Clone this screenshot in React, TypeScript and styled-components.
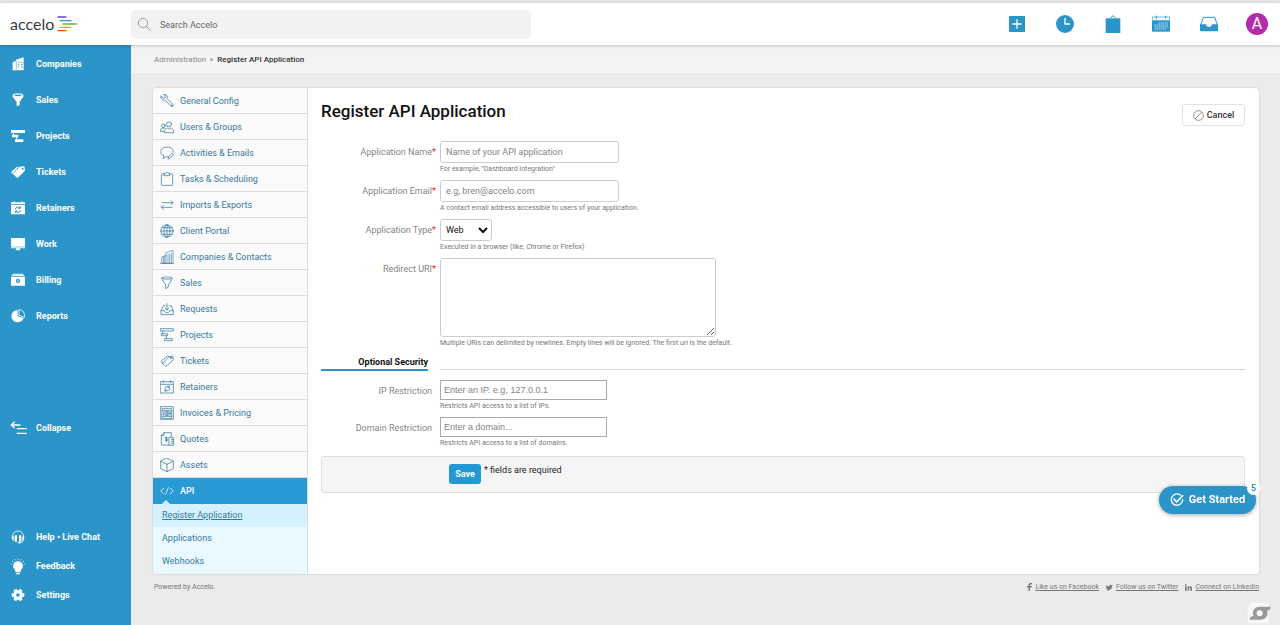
import React from "react";
import styled, { createGlobalStyle, css } from "styled-components";

const blue = "#2b95ca";
const teal = "#37799c";

const GlobalStyle = createGlobalStyle`
  *, *::before, *::after { box-sizing: border-box; }
  body {
    margin: 0;
    background: #ebebeb;
    color: #222;
    font-family: Roboto, "Liberation Sans", sans-serif;
    font-size: 9px;
    line-height: 12px;
  }
  button, input, select, textarea { font: inherit; color: inherit; margin: 0; }
  button { border: 0; padding: 0; background: none; cursor: pointer; }
  a { color: inherit; text-decoration: none; }
  ul { list-style: none; margin: 0; padding: 0; }
  svg { display: block; flex: none; }
`;

/* ---------- layout ---------- */

const Page = styled.div`
  min-height: 100vh;
  display: flex;
  flex-direction: column;
  border-top: 3px solid #e3e3e3;
`;

const Header = styled.header`
  position: relative;
  z-index: 2;
  display: flex;
  align-items: center;
  height: 42px;
  padding-right: 12px;
  background: #fff;
  box-shadow: 0 1px 3px rgba(0, 0, 0, 0.2);
`;

const Logo = styled.a`
  display: flex;
  align-items: center;
  gap: 3px;
  width: 131px;
  padding-left: 10px;
  font-family: Lato, sans-serif;
  font-size: 16px;
  line-height: 20px;
  color: #3c3c3c;
`;

const Search = styled.label`
  display: flex;
  align-items: center;
  gap: 8px;
  width: 400px;
  height: 29px;
  padding: 0 6px;
  border-radius: 5px;
  background: #f2f2f2;
`;

const SearchInput = styled.input`
  flex: 1;
  border: 0;
  padding: 1px 0 0;
  background: transparent;
  font-size: 9px;
  &::placeholder { color: #666; opacity: 1; }
`;

const HeaderActions = styled.nav`
  display: flex;
  gap: 26px;
  margin-left: auto;
`;

const HeaderButton = styled.button`
  display: grid;
  place-items: center;
  width: 22px;
  height: 22px;
  color: ${blue};
`;

const Avatar = styled(HeaderButton)`
  border-radius: 50%;
  background: #b32bab;
  color: #fff;
  font-size: 16px;
  line-height: 22px;
`;

const Body = styled.div`
  flex: 1;
  display: flex;
`;

const Sidebar = styled.nav`
  flex: none;
  display: flex;
  flex-direction: column;
  justify-content: space-between;
  width: 131px;
  padding-bottom: 16px;
  background: ${blue};
`;

const SideLink = styled.a<{ $compact?: boolean }>`
  display: flex;
  align-items: center;
  gap: 11px;
  height: ${(p) => (p.$compact ? 29 : 36)}px;
  padding: 1px 0 0 11px;
  color: #fff;
  font-size: 9px;
  font-weight: 700;
`;

const Main = styled.main`
  flex: 1;
  min-width: 0;
`;

const Breadcrumb = styled.nav`
  display: flex;
  align-items: center;
  gap: 4px;
  height: 30px;
  padding-left: 23px;
  background: #f3f3f3;
  border-bottom: 1px solid #e2e2e2;
  color: #888;
  font-size: 8px;
  b { color: #333; font-weight: 500; }
`;

const Dot = styled.i`
  width: 3px;
  height: 3px;
  border-radius: 50%;
  background: #aaa;
`;

const Content = styled.div`
  padding: 13px 21px 0 22px;
`;

const Panel = styled.div`
  display: flex;
  min-height: 486px;
  border-radius: 4px;
  background: #fff;
  box-shadow: 0 0 2px rgba(0, 0, 0, 0.22);
  overflow: hidden;
`;

const ConfigNav = styled.nav`
  flex: none;
  width: 155px;
  border-right: 1px solid #ddd;
`;

const ConfigLink = styled.a<{ $active?: boolean }>`
  position: relative;
  display: flex;
  align-items: center;
  gap: 6px;
  height: 26px;
  padding-left: 7px;
  border-bottom: 1px solid #dcdcdc;
  background: #fafafa;
  color: ${teal};
  ${(p) =>
    p.$active &&
    css`
      border-bottom-color: #2a9ad5;
      background: #2a9ad5;
      color: #fff;
      font-weight: 500;
      &::after {
        content: "";
        position: absolute;
        left: 9px;
        bottom: -1px;
        border: 4px solid transparent;
        border-top: 0;
        border-bottom-color: #d5f1ff;
      }
    `}
`;

const SubNav = styled.ul`
  padding-bottom: 1px;
  background: #eaf8ff;
`;

const SubLink = styled.a<{ $active?: boolean }>`
  display: block;
  padding-left: 9px;
  line-height: 23px;
  color: ${teal};
  background: ${(p) => (p.$active ? "#d5f1ff" : "transparent")};
  text-decoration: ${(p) => (p.$active ? "underline" : "none")};
`;

/* ---------- form ---------- */

const Form = styled.form`
  flex: 1;
  min-width: 0;
  padding: 11px 14px 12px 13px;
`;

const FormHead = styled.div`
  display: flex;
  justify-content: space-between;
  align-items: flex-start;
  height: 42px;
`;

const Title = styled.h1`
  margin: 0;
  font-size: 17px;
  line-height: 24px;
  font-weight: 500;
  color: #111;
`;

const CancelButton = styled.button`
  display: flex;
  align-items: center;
  justify-content: center;
  gap: 3px;
  width: 63px;
  height: 22px;
  margin-top: 5px;
  border: 1px solid #e2e2e2;
  border-radius: 3px;
  background: #fff;
  font-weight: 500;
  color: #333;
`;

const Row = styled.div`
  display: grid;
  grid-template-columns: 116px 1fr;
  column-gap: 3px;
  margin-bottom: 5px;
  > label {
    display: flex;
    justify-content: flex-end;
    line-height: 22px;
    color: #858585;
  }
`;

const Star = styled.span`
  width: 5px;
  color: #e8202a;
`;

const Hint = styled.p`
  margin: 0;
  font-size: 7px;
  line-height: 12px;
  color: #777;
`;

const field = css`
  display: block;
  border: 1px solid #ccc;
  border-radius: 3px;
  background: #fff;
  &::placeholder { color: #858585; opacity: 1; }
`;

const TextInput = styled.input`
  ${field}
  width: 179px;
  height: 22px;
  padding: 0 5px;
`;

const PlainInput = styled.input`
  ${field}
  width: 167px;
  height: 20px;
  padding: 0 3px;
  border: 1px solid #aaa;
  border-radius: 0;
  font-family: "Liberation Sans", sans-serif;
`;

const Select = styled.select`
  ${field}
  width: 52px;
  height: 22px;
  padding: 0 1px;
  color: #111;
`;

const TextArea = styled.textarea`
  ${field}
  width: 276px;
  height: 79px;
  padding: 4px;
`;

const SectionHead = styled.div`
  display: grid;
  grid-template-columns: 107px 1fr;
  column-gap: 12px;
  margin-bottom: 9px;
  h2 {
    margin: 0;
    padding-top: 2px;
    border-bottom: 2px solid ${blue};
    font-size: 9px;
    line-height: 13px;
    font-weight: 700;
    text-align: right;
    color: #111;
  }
  span { border-bottom: 1px solid #d5d5d5; margin-bottom: 1px; }
`;

const FormFoot = styled.div`
  display: flex;
  align-items: flex-start;
  gap: 3px;
  height: 37px;
  margin-top: 7px;
  padding: 7px 0 0 127px;
  border: 1px solid #dedede;
  border-radius: 3px;
  background: #f5f5f5;
`;

const SaveButton = styled.button`
  width: 32px;
  height: 20px;
  border-radius: 3px;
  background: #2199d4;
  color: #fff;
  font-weight: 700;
`;

/* ---------- footer and floating items ---------- */

const Footer = styled.footer`
  display: flex;
  gap: 7px;
  padding: 7px 0 0 1px;
  font-size: 7px;
  color: #777;
  span { margin-right: auto; }
  a { display: flex; align-items: center; gap: 3px; }
  u { text-underline-offset: 1px; }
`;

const GetStarted = styled.button`
  position: fixed;
  right: 24px;
  bottom: 111px;
  z-index: 3;
  display: flex;
  align-items: center;
  justify-content: center;
  gap: 5px;
  width: 97px;
  height: 28px;
  border-radius: 14px;
  background: ${blue};
  box-shadow: 0 1px 4px rgba(0, 0, 0, 0.35);
  color: #fff;
  font-size: 11px;
  font-weight: 700;
`;

const Count = styled.span`
  position: absolute;
  top: -4px;
  right: -4px;
  width: 13px;
  height: 13px;
  border-radius: 50%;
  background: #fff;
  color: ${blue};
  font-size: 9px;
  line-height: 13px;
`;

const Watermark = styled.div`
  position: fixed;
  right: 9px;
  bottom: 1px;
  z-index: 3;
`;

/* ---------- icons ---------- */

const Solid = ({ children }: { children: React.ReactNode }) => (
  <svg width="14" height="14" viewBox="0 0 42 42" fill="currentColor" stroke="none" overflow="visible">
    {children}
  </svg>
);

const Outline = ({ children }: { children: React.ReactNode }) => (
  <svg width="14" height="14" viewBox="0 0 42 42" fill="none" stroke="currentColor" strokeWidth="2.2" strokeLinejoin="round" strokeLinecap="round">
    {children}
  </svg>
);

const solid = {
  companies: (
    <Solid>
      <path d="M5 16l10-5V8l23-7v39H3v-2h2z" />
      <path d="M16 12v25" stroke={blue} strokeWidth="1.500" />
      <path d="M21 16h4M21 23h4M21 30h4M30 16h5M30 23h5M30 30h5" stroke={blue} strokeWidth="2.500" />
    </Solid>
  ),
  sales: (
    <Solid>
      <path d="M5 7c0-8 32-8 32 0v4L26 27v9l-9 4V27L5 11z" />
      <ellipse cx="21" cy="7" rx="12" ry="2.500" fill={blue} />
    </Solid>
  ),
  projects: (
    <Solid>
      <path d="M0 3h42v9H0zM3 17h19v8H3zM12 31h25v8H12z" />
      <path d="M7 12v6M17 24v8" stroke="currentColor" strokeWidth="3" />
    </Solid>
  ),
  tickets: (
    <Solid>
      <path d="M0 22L18 5h5L6 24l6 9z" />
      <path d="M8 25L26 5l14-1 2 13-20 20c-3 2-5 2-7-1l-7-8c-1-1-1-2 0-3z" />
      <circle cx="35" cy="11" r="3" fill={blue} />
    </Solid>
  ),
  retainers: (
    <Solid>
      <path d="M0 4h42v6H0zM0 12h42v28H0z" />
      <path d="M8 1h3v7H8zM31 1h3v7h-3z" />
      <path d="M13 25a8 8 0 0 1 14-4m1-5v6h-6M29 27a8 8 0 0 1-14 5m-1 4v-6h6" fill="none" stroke={blue} strokeWidth="3" />
    </Solid>
  ),
  work: (
    <Solid>
      <path d="M0 3h42v26H0zM0 31h42v3H0zM17 34h8l4 6H13z" />
    </Solid>
  ),
  billing: (
    <Solid>
      <path d="M5 2h32v3H5zM2 6h38v3H2zM0 11h42v27H0z" />
      <circle cx="21" cy="24" r="6.500" fill={blue} />
      <path d="M24 21h-5v3h4v3h-5" fill="none" stroke="currentColor" strokeWidth="1.200" />
    </Solid>
  ),
  reports: (
    <Solid>
      <path d="M20 3v19l18 6A19 18.500 0 1 1 20 3z" />
      <path d="M24 2v17l16 6C43 12 35 3 24 2z" fill="none" stroke="currentColor" strokeWidth="2.500" />
    </Solid>
  ),
  collapse: (
    <Solid>
      <path d="M28 12H1M11 2L1 12l10 9M17 23h30M17 37h30" fill="none" stroke="currentColor" strokeWidth="4" />
    </Solid>
  ),
  help: (
    <Solid>
      <path d="M4 24v-4a17 17 0 0 1 34 0v4M37 28c0 7-5 11-13 11" fill="none" stroke="currentColor" strokeWidth="2.500" />
      <path d="M3 19h5v14C3 31 2 24 3 19zM34 19h5c1 5 0 12-5 14zM11 16h7v19h-7zM24 16h7v19h-7zM20 36h8v4h-8z" />
    </Solid>
  ),
  feedback: (
    <Solid>
      <path d="M21 7a15 14 0 0 1 10 24l-3 8H14l-3-8A15 14 0 0 1 21 7zM14 41h14l-2 5H16z" />
      <path d="M21-2v5M11 0l2 4M31 0l-2 4M3 6l5 3M39 6l-5 3M0 15h4M42 15h-4" stroke="currentColor" strokeWidth="2" />
    </Solid>
  ),
  settings: (
    <Solid>
      <circle cx="21" cy="21" r="10" fill="none" stroke="currentColor" strokeWidth="9" />
      <path d="M16 2h10v9H16zM16 31h10v9H16z" transform="rotate(30 21 21)" />
      <path d="M16 2h10v9H16zM16 31h10v9H16z" transform="rotate(90 21 21)" />
      <path d="M16 2h10v9H16zM16 31h10v9H16z" transform="rotate(150 21 21)" />
    </Solid>
  ),
};

const outline = {
  wrench: (
    <Outline>
      <path d="M3 7l7 6 5-2 1-6-6-4c5-1 11 2 12 8l-1 5 18 18c2 4-3 8-6 5L16 19C9 21 1 15 3 7z" />
      <circle cx="34" cy="34" r="1" />
    </Outline>
  ),
  users: (
    <Outline>
      <circle cx="27" cy="13" r="7.500" />
      <path d="M13 37c0-8 4-11 9-13 3 4 7 4 10 0 5 2 9 5 9 13z" />
      <circle cx="10" cy="17" r="5.500" />
      <path d="M11 34H1c0-7 3-9 6-10 2 2 5 2 7 0" />
    </Outline>
  ),
  chat: (
    <Outline>
      <path d="M11 30l-1 8 8-6c2 1 5 1 7 0M11 30C-3 24 0 7 15 4c16-3 28 6 24 15M24 38l2-7 11-9 4 5-11 9z" />
    </Outline>
  ),
  clipboard: (
    <Outline>
      <path d="M13 6H6c-1 0-2 1-2 2v29c0 2 1 3 3 3h28c2 0 3-1 3-3V8c0-1-1-2-2-2h-7M13 4h4c1-5 7-5 8 0h4v7H13z" />
    </Outline>
  ),
  arrows: (
    <Outline>
      <path d="M6 14h33M33 8l6 6-6 5M36 28H4M10 22l-6 6 6 5" />
    </Outline>
  ),
  globe: (
    <Outline>
      <circle cx="21" cy="21" r="18.500" />
      <ellipse cx="21" cy="21" rx="9" ry="18.500" />
      <path d="M21 2v38M2 21h38M6 11h30M6 31h30" />
    </Outline>
  ),
  building: (
    <Outline>
      <path d="M18 40V8l21-7v39zM18 16L5 21v19h13M1 40h40M10 20v20M14 18v22M24 14v26M29 12v28M34 10v30" strokeWidth="1.800" />
    </Outline>
  ),
  funnel: (
    <Outline>
      <path d="M6 6c0-4 30-4 30 0 0 5-30 5-30 0zM6 6v4l11 17v11l8-5v-6l11-17V6" />
    </Outline>
  ),
  tray: (
    <Outline>
      <path d="M15 10l-6 2-6 15v11h37V27l-6-15-6-2M3 26h10c1 8 15 8 16 0h11M21 5v19M15 18l6 6 6-6" />
    </Outline>
  ),
  gantt: (
    <Outline>
      <path d="M2 2h38v7H2zM5 17h18v6H5zM15 32h22v6H15zM8 9v8M19 23l0 9" />
    </Outline>
  ),
  tag: (
    <Outline>
      <path d="M10 26L26 9l12-3 2 11-19 18c-2 2-4 2-6 0l-6-6c-1-1-1-2 1-3zM9 30l-6-8L22 6l5 2" />
      <circle cx="33" cy="12" r="2" />
    </Outline>
  ),
  calendar: (
    <Outline>
      <path d="M2 5h38v34H2zM2 13h38M10 2v6M32 2v6M14 27a8 8 0 0 1 13-6m1-4v5h-5M29 25a8 8 0 0 1-13 6m-1 4v-5h5" />
    </Outline>
  ),
  invoice: (
    <Outline>
      <path d="M2 2h38v38H2zM7 8h28v29H7zM7 14h28M7 31h28" />
      <circle cx="21" cy="22" r="7" />
      <path d="M24 19h-5v3h4v3h-5M11 18v9M31 18v9" />
    </Outline>
  ),
  quote: (
    <Outline>
      <path d="M27 39H4V11l8-9h22v11M4 11h8V2M28 16h12v24H28zM34 22h6M34 28h6M34 34h6M22 17h-6v4h6v5h-6M19 15v14" />
    </Outline>
  ),
  box: (
    <Outline>
      <path d="M21 1l19 9v22l-19 9-19-9V10zM2 10l19 9 19-9M21 19v22" />
    </Outline>
  ),
  code: (
    <Outline>
      <path d="M11 13L2 21l9 8M31 13l9 8-9 8M25 11l-8 20" />
    </Outline>
  ),
};

const primaryTop = [
  ["Companies", solid.companies],
  ["Sales", solid.sales],
  ["Projects", solid.projects],
  ["Tickets", solid.tickets],
  ["Retainers", solid.retainers],
  ["Work", solid.work],
  ["Billing", solid.billing],
  ["Reports", solid.reports],
] as const;

const primaryBottom = [
  ["Help • Live Chat", solid.help],
  ["Feedback", solid.feedback],
  ["Settings", solid.settings],
] as const;

const configItems = [
  ["General Config", outline.wrench],
  ["Users & Groups", outline.users],
  ["Activities & Emails", outline.chat],
  ["Tasks & Scheduling", outline.clipboard],
  ["Imports & Exports", outline.arrows],
  ["Client Portal", outline.globe],
  ["Companies & Contacts", outline.building],
  ["Sales", outline.funnel],
  ["Requests", outline.tray],
  ["Projects", outline.gantt],
  ["Tickets", outline.tag],
  ["Retainers", outline.calendar],
  ["Invoices & Pricing", outline.invoice],
  ["Quotes", outline.quote],
  ["Assets", outline.box],
  ["API", outline.code],
] as const;

function TopBar() {
  return (
    <Header>
      <Logo href="#" aria-label="accelo">
        accelo
        <svg width="20" height="16" viewBox="0 0 60 48" fill="none" strokeWidth="4" strokeLinecap="round">
          <path d="M3 3h24" stroke="#5b4bc0" />
          <path d="M10 14h32" stroke="#2b95ca" />
          <path d="M18 24h40" stroke="#5cb84a" />
          <path d="M10 34h32" stroke="#f79a2b" />
          <path d="M3 44h24" stroke="#f0471f" />
        </svg>
      </Logo>
      <Search>
        <svg width="15" height="15" viewBox="0 0 45 45" fill="none" stroke="#8a8a8a" strokeWidth="2.500">
          <circle cx="18" cy="18" r="14" />
          <path d="M28 28l13 13" />
        </svg>
        <SearchInput type="text" aria-label="Search" placeholder="Search Accelo" />
      </Search>
      <HeaderActions>
        <HeaderButton type="button" aria-label="Create">
          <svg width="16" height="16" viewBox="0 0 48 48">
            <path d="M0 0h48v48H0z" fill="currentColor" />
            <path d="M24 10v28M10 24h28" stroke="#fff" strokeWidth="4" />
          </svg>
        </HeaderButton>
        <HeaderButton type="button" aria-label="Timers">
          <svg width="18" height="18" viewBox="0 0 54 54">
            <circle cx="27" cy="27" r="27" fill="currentColor" />
            <path d="M27 9v18h15" fill="none" stroke="#fff" strokeWidth="4" />
          </svg>
        </HeaderButton>
        <HeaderButton type="button" aria-label="Tasks">
          <svg width="16" height="18" viewBox="0 0 48 54">
            <path d="M2 10h44v44H2z" fill="currentColor" />
            <path d="M14 11L24 2l10 9" fill="none" stroke="currentColor" strokeWidth="3" />
          </svg>
        </HeaderButton>
        <HeaderButton type="button" aria-label="Calendar">
          <svg width="18" height="18" viewBox="0 0 54 54">
            <path d="M1 6h52v10H1z" fill="none" stroke="currentColor" strokeWidth="2" />
            <path d="M0 17h54v33H0z" fill="currentColor" />
            <path d="M13 2v9M41 2v9" stroke="currentColor" strokeWidth="3" />
            <path d="M20 24h27M8 30h39M8 36h39M8 42h33" stroke="#fff" strokeWidth="3" strokeDasharray="3 3" />
          </svg>
        </HeaderButton>
        <HeaderButton type="button" aria-label="Inbox">
          <svg width="18" height="16" viewBox="0 0 54 48">
            <path d="M2 26L10 4h34l8 22" fill="none" stroke="currentColor" strokeWidth="3" />
            <path d="M0 25h18c1 11 17 11 18 0h18v18c0 2-1 3-3 3H3c-2 0-3-1-3-3z" fill="currentColor" />
          </svg>
        </HeaderButton>
        <Avatar type="button">A</Avatar>
      </HeaderActions>
    </Header>
  );
}

function ApplicationForm() {
  return (
    <Form>
      <FormHead>
        <Title>Register API Application</Title>
        <CancelButton type="button">
          <svg width="11" height="11" viewBox="0 0 33 33" fill="none" stroke="#777" strokeWidth="2.500">
            <circle cx="16.500" cy="16.500" r="14.500" />
            <path d="M7 26L26 7" />
          </svg>
          Cancel
        </CancelButton>
      </FormHead>
      <Row>
        <label htmlFor="name">Application Name<Star>*</Star></label>
        <div>
          <TextInput id="name" placeholder="Name of your API application" />
          <Hint>For example, "Dashboard Integration"</Hint>
        </div>
      </Row>
      <Row>
        <label htmlFor="email">Application Email<Star>*</Star></label>
        <div>
          <TextInput id="email" placeholder="e.g, bren@accelo.com" />
          <Hint>A contact email address accessible to users of your application.</Hint>
        </div>
      </Row>
      <Row>
        <label htmlFor="type">Application Type<Star>*</Star></label>
        <div>
          <Select id="type">
            <option>Web</option>
          </Select>
          <Hint>Executed in a browser (like, Chrome or Firefox)</Hint>
        </div>
      </Row>
      <Row>
        <label htmlFor="uri">Redirect URI<Star>*</Star></label>
        <div>
          <TextArea id="uri" />
          <Hint>Multiple URIs can delimited by newlines. Empty lines will be ignored. The first uri is the default.</Hint>
        </div>
      </Row>
      <SectionHead>
        <h2>Optional Security</h2>
        <span />
      </SectionHead>
      <Row>
        <label htmlFor="ip">IP Restriction<Star /></label>
        <div>
          <PlainInput id="ip" placeholder="Enter an IP. e.g, 127.0.0.1" />
          <Hint>Restricts API access to a list of IPs.</Hint>
        </div>
      </Row>
      <Row>
        <label htmlFor="domain">Domain Restriction<Star /></label>
        <div>
          <PlainInput id="domain" placeholder="Enter a domain..." />
          <Hint>Restricts API access to a list of domains.</Hint>
        </div>
      </Row>
      <FormFoot>
        <SaveButton type="button">Save</SaveButton>
        <span>* fields are required</span>
      </FormFoot>
    </Form>
  );
}

export default function App() {
  return (
    <>
      <GlobalStyle />
      <Page>
        <TopBar />
        <Body>
          <Sidebar>
            <div>
              {primaryTop.map(([text, icon]) => (
                <SideLink key={text} href="#">{icon}{text}</SideLink>
              ))}
            </div>
            <SideLink as="button" type="button">{solid.collapse}Collapse</SideLink>
            <div>
              {primaryBottom.map(([text, icon]) => (
                <SideLink key={text} href="#" $compact>{icon}{text}</SideLink>
              ))}
            </div>
          </Sidebar>
          <Main>
            <Breadcrumb>
              <a href="#">Administration</a>
              <Dot />
              <b>Register API Application</b>
            </Breadcrumb>
            <Content>
              <Panel>
                <ConfigNav>
                  {configItems.map(([text, icon]) => (
                    <ConfigLink key={text} href="#" $active={text === "API"}>{icon}{text}</ConfigLink>
                  ))}
                  <SubNav>
                    <li><SubLink href="#" $active>Register Application</SubLink></li>
                    <li><SubLink href="#">Applications</SubLink></li>
                    <li><SubLink href="#">Webhooks</SubLink></li>
                  </SubNav>
                </ConfigNav>
                <ApplicationForm />
              </Panel>
              <Footer>
                <span>Powered by Accelo.</span>
                <a href="#">
                  <svg width="5" height="8" viewBox="0 0 10 16" fill="currentColor">
                    <path d="M3 16V9H0V6h3V4c0-3 2-4 4-4h3v3H8C7 3 6 3 6 4v2h4L9 9H6v7z" />
                  </svg>
                  <u>Like us on Facebook</u>
                </a>
                <a href="#">
                  <svg width="7" height="7" viewBox="0 0 24 24" fill="currentColor">
                    <path d="M24 5l-3 2C21 17 13 22 7 22c-3 0-5-1-7-2 3 0 5-1 7-2-2 0-4-1-5-3h2c-2-1-4-3-4-5l2 1C0 8 0 6 1 4c3 3 6 5 10 5 0-8 6-8 9-5l3-1-2 3z" />
                  </svg>
                  <u>Follow us on Twitter</u>
                </a>
                <a href="#">
                  <svg width="7" height="7" viewBox="0 0 21 21" fill="currentColor">
                    <circle cx="2.500" cy="2.500" r="2.500" />
                    <path d="M0 7h5v13H0zM8 7h4v2c3-4 9-2 9 3v8h-5v-7c0-3-4-3-4 0v7H8z" />
                  </svg>
                  <u>Connect on LinkedIn</u>
                </a>
              </Footer>
            </Content>
          </Main>
        </Body>
        <GetStarted type="button">
          <svg width="14" height="14" viewBox="0 0 42 42" fill="none" stroke="currentColor" strokeWidth="4" strokeLinecap="round" strokeLinejoin="round">
            <path d="M31 6A17 17 0 1 0 38 20" />
            <path d="M12 18l8 9L38 8" strokeWidth="5" />
          </svg>
          Get Started
          <Count>5</Count>
        </GetStarted>
        <Watermark>
          <svg width="24" height="22" viewBox="0 0 72 66">
            <path d="M22 2h44v62H2V22C2 8 10 2 22 2z" fill="#f7f7f7" />
            <path d="M71 14c-1 9-5 11-11 12a21 19 0 0 1-20 27H8c1-8 5-11 12-11a20 19 0 0 1 18-28z" fill="#999" />
            <circle cx="38" cy="34" r="9" fill="#f7f7f7" />
          </svg>
        </Watermark>
      </Page>
    </>
  );
}
